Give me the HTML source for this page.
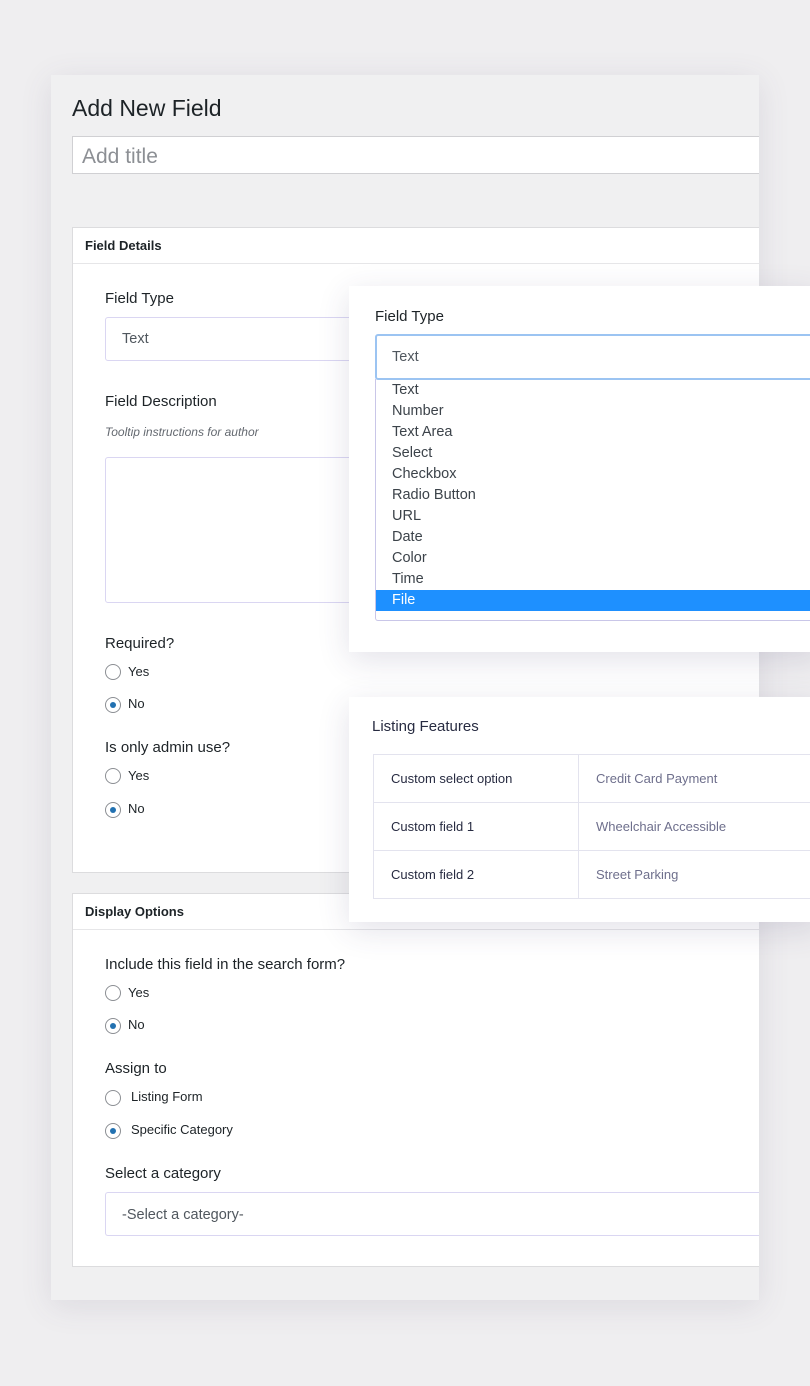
<!DOCTYPE html>
<html><head><meta charset="utf-8"><style>
*{box-sizing:border-box;margin:0;padding:0}
body{width:810px;height:1386px;background:#efeef0;font-family:"Liberation Sans",sans-serif;color:#1d2327;position:relative;overflow:hidden}
.a{position:absolute;white-space:nowrap}
.win{left:51px;top:75px;width:708px;height:1225px;background:#f0f0f1;box-shadow:0 6px 30px rgba(80,70,110,.12)}
.panel{background:#fff;border:1px solid #dcdcde;border-right:none}
.lbl{font-size:15px;color:#1d2327}
.rad{width:16px;height:16px;border:1px solid #8c8f94;border-radius:50%;background:#fff}
.rad.on::after{content:"";position:absolute;left:4px;top:4px;width:6px;height:6px;border-radius:50%;background:#2271b1}
.rt{font-size:13px;color:#1d2327}
.pop{background:#fff;box-shadow:0 8px 30px rgba(60,50,100,.14)}
.opt{left:392px;font-size:14.5px;color:#3c434a}
td{border:1px solid #e3e3ee;height:48px;font-size:13px;padding-left:17px}
</style></head><body>
<div class="a win"></div>
<div class="a" style="left:72px;top:95px;font-size:23px;color:#1d2327">Add New Field</div>
<div class="a" style="left:72px;top:136px;width:687px;height:38px;background:#fff;border:1px solid #d0d0d3;border-right:none"></div>
<div class="a" style="left:82px;top:145px;font-size:21px;color:#8c8f94">Add title</div>

<div class="a panel" style="left:72px;top:227px;width:687px;height:646px"></div>
<div class="a" style="left:73px;top:263px;width:686px;height:1px;background:#e6e6e8"></div>
<div class="a" style="left:85px;top:238px;font-size:13px;font-weight:bold">Field Details</div>
<div class="a lbl" style="left:105px;top:290px">Field Type</div>
<div class="a" style="left:105px;top:317px;width:260px;height:44px;border:1px solid #dad6f2;border-radius:3px;background:#fff"></div>
<div class="a" style="left:122px;top:331px;font-size:14.5px;color:#50575e">Text</div>
<div class="a lbl" style="left:105px;top:393px">Field Description</div>
<div class="a" style="left:105px;top:425px;font-size:12px;font-style:italic;color:#646970">Tooltip instructions for author</div>
<div class="a" style="left:105px;top:457px;width:260px;height:146px;border:1px solid #dad6f2;border-radius:3px"></div>
<div class="a lbl" style="left:105px;top:635px">Required?</div>
<div class="a rad" style="left:105px;top:664px"></div><div class="a rt" style="left:128px;top:664px">Yes</div>
<div class="a rad on" style="left:105px;top:697px"></div><div class="a rt" style="left:128px;top:696px">No</div>
<div class="a lbl" style="left:105px;top:739px">Is only admin use?</div>
<div class="a rad" style="left:105px;top:768px"></div><div class="a rt" style="left:128px;top:768px">Yes</div>
<div class="a rad on" style="left:105px;top:802px"></div><div class="a rt" style="left:128px;top:801px">No</div>

<div class="a panel" style="left:72px;top:893px;width:687px;height:374px"></div>
<div class="a" style="left:73px;top:929px;width:686px;height:1px;background:#e6e6e8"></div>
<div class="a" style="left:85px;top:904px;font-size:13px;font-weight:bold">Display Options</div>
<div class="a lbl" style="left:105px;top:956px">Include this field in the search form?</div>
<div class="a rad" style="left:105px;top:985px"></div><div class="a rt" style="left:128px;top:985px">Yes</div>
<div class="a rad on" style="left:105px;top:1018px"></div><div class="a rt" style="left:128px;top:1017px">No</div>
<div class="a lbl" style="left:105px;top:1060px">Assign to</div>
<div class="a rad" style="left:105px;top:1090px"></div><div class="a rt" style="left:131px;top:1089px">Listing Form</div>
<div class="a rad on" style="left:105px;top:1123px"></div><div class="a rt" style="left:131px;top:1122px">Specific Category</div>
<div class="a lbl" style="left:105px;top:1165px">Select a category</div>
<div class="a" style="left:105px;top:1192px;width:654px;height:44px;border:1px solid #dad6f2;border-right:none;border-radius:3px 0 0 3px;background:#fff"></div>
<div class="a" style="left:122px;top:1207px;font-size:14.5px;color:#50575e">-Select a category-</div>

<div class="a pop" style="left:349px;top:286px;width:470px;height:366px"></div>
<div class="a lbl" style="left:375px;top:308px">Field Type</div>
<div class="a" style="left:375px;top:334px;width:445px;height:46px;border:2px solid #9cc4f2;border-radius:3px;background:#fff"></div>
<div class="a" style="left:392px;top:349px;font-size:14.5px;color:#50575e">Text</div>
<div class="a" style="left:375px;top:379px;width:445px;height:242px;border:1px solid #c9c6e8;border-top:none;border-radius:0 0 3px 3px"></div>
<div class="a" style="left:376px;top:590px;width:440px;height:21px;background:#1e90ff"></div>
<div class="a opt" style="top:382px">Text</div>
<div class="a opt" style="top:403px">Number</div>
<div class="a opt" style="top:424px">Text Area</div>
<div class="a opt" style="top:445px">Select</div>
<div class="a opt" style="top:466px">Checkbox</div>
<div class="a opt" style="top:487px">Radio Button</div>
<div class="a opt" style="top:508px">URL</div>
<div class="a opt" style="top:529px">Date</div>
<div class="a opt" style="top:550px">Color</div>
<div class="a opt" style="top:571px">Time</div>
<div class="a opt" style="top:592px;color:#fff">File</div>

<div class="a pop" style="left:349px;top:697px;width:470px;height:225px"></div>
<div class="a" style="left:372px;top:718px;font-size:15px;color:#272b41">Listing Features</div>
<table class="a" style="left:373px;top:754px;width:450px;border-collapse:collapse">
<tr><td style="width:205px;color:#272b41">Custom select option</td><td style="color:#6e6f8c">Credit Card Payment</td></tr>
<tr><td style="color:#272b41">Custom field 1</td><td style="color:#6e6f8c">Wheelchair Accessible</td></tr>
<tr><td style="color:#272b41">Custom field 2</td><td style="color:#6e6f8c">Street Parking</td></tr>
</table>
</body></html>
